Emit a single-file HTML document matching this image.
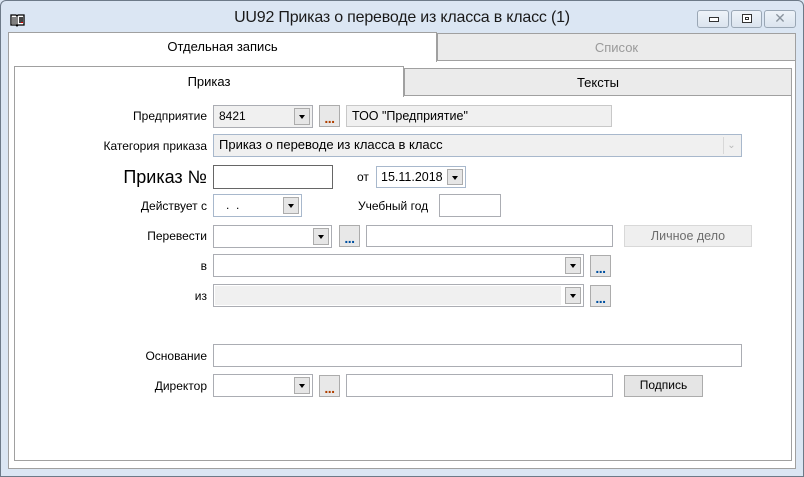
<!DOCTYPE html>
<html><head><meta charset="utf-8"><style>
*{box-sizing:border-box;margin:0;padding:0}
body{width:804px;height:477px;overflow:hidden;background:#dbe6f3;font-family:"Liberation Sans","DejaVu Sans",sans-serif;font-size:12px;color:#000;position:relative}
.a{position:absolute}
.win{left:0;top:0;width:804px;height:477px;border:1px solid #6d7a88;border-radius:6px 6px 0 0;background:#dbe6f3}
.title{left:0;top:9px;width:804px;text-align:center;font-size:16px;color:#1a1a1a;letter-spacing:-0.2px}
.wb{top:10px;height:18px;border:1px solid #9aa7b5;border-radius:3px;background:linear-gradient(#eef3f9,#dbe4ee)}
.lbl{text-align:right;white-space:nowrap}
.box{border:1px solid #abadb3;background:#fff}
.gr{background:#f0f0f0}
.arr{position:absolute;right:2px;top:2px;width:16px;bottom:2px;border:1px solid #acacac;background:#e6e6e6}
.arr:after{content:"";position:absolute;left:4px;top:6px;border-left:3.5px solid transparent;border-right:3.5px solid transparent;border-top:4px solid #000}
.dots{border:1px solid #acacac;background:#e8e8e8;text-align:center;font-size:14px;line-height:24px;font-weight:bold;letter-spacing:-0.5px;overflow:hidden}
.btn{border:1px solid #acacac;background:#e5e5e5;text-align:center;line-height:19px}
.txt{padding-left:5px;line-height:20px}
</style></head><body>
<div class="a win"></div>
<svg class="a" style="left:10px;top:13px" width="16" height="14" viewBox="0 0 16 14"><path d="M1 2h5l1 1 1-1h6v10H8l-1 1-1-1H1z" fill="#fff" stroke="#000" stroke-width="1.3"/><path d="M7 3v10M3 4v7M5 4v7" stroke="#000" stroke-width="1"/><rect x="9" y="4" width="4" height="6" fill="#444"/><rect x="11" y="9" width="2" height="1" fill="#d00"/></svg>
<div class="a title">UU92 Приказ о переводе из класса в класс (1)</div>
<div class="a wb" style="left:697px;width:32px"><div class="a" style="left:11px;top:6px;width:10px;height:5px;border:1px solid #333;background:#fff"></div></div>
<div class="a wb" style="left:731px;width:31px"><div class="a" style="left:10px;top:3px;width:10px;height:9px;border:1px solid #333;background:#fff"><div class="a" style="left:2px;top:2px;width:4px;height:3px;border:1px solid #333"></div></div></div>
<div class="a wb" style="left:764px;width:32px;color:#8a949e;text-align:center;font-size:14px;line-height:15px">✕</div>

<div class="a" style="left:8px;top:60px;width:788px;height:409px;background:#fff;border:1px solid #a0a0a0"></div>
<div class="a" style="left:8px;top:32px;width:429px;height:30px;background:#fff;border:1px solid #a0a0a0;border-bottom:none;text-align:center;line-height:27px;font-size:13px">Отдельная запись</div>
<div class="a" style="left:437px;top:33px;width:359px;height:28px;background:#ebebeb;border:1px solid #a0a0a0;text-align:center;line-height:27px;font-size:13px;color:#9a9a9a">Список</div>
<div class="a" style="left:14px;top:95px;width:778px;height:366px;border:1px solid #a0a0a0;background:#fff"></div>
<div class="a" style="left:14px;top:66px;width:390px;height:31px;background:#fff;border:1px solid #a0a0a0;border-bottom:none;text-align:center;line-height:30px;font-size:13px">Приказ</div>
<div class="a" style="left:404px;top:68px;width:388px;height:28px;background:#ebebeb;border:1px solid #a0a0a0;text-align:center;line-height:28px;font-size:13px">Тексты</div>

<div class="a lbl" style="right:597px;top:109px">Предприятие</div>
<div class="a box gr txt" style="left:213px;top:105px;width:100px;height:23px">8421<div class="arr"></div></div>
<div class="a dots" style="left:319px;top:105px;width:21px;height:22px;color:#b04000">...</div>
<div class="a box gr txt" style="left:346px;top:105px;width:266px;height:22px;border-color:#c8c8c8;font-size:12.5px">ТОО "Предприятие"</div>
<div class="a lbl" style="right:597px;top:139px">Категория приказа</div>
<div class="a box gr txt" style="left:213px;top:134px;width:529px;height:23px;border-color:#a8b8cc;font-size:13px">Приказ о переводе из класса в класс<div class="a" style="right:2px;top:2px;width:16px;height:17px;border-left:1px solid #d8d8d8;color:#bbb;text-align:center;font-size:10px;line-height:17px">⌄</div></div>
<div class="a lbl" style="right:597px;top:167px;font-size:18px">Приказ №</div>
<div class="a box" style="left:213px;top:165px;width:120px;height:24px;border-color:#666"></div>
<div class="a" style="left:357px;top:170px">от</div>
<div class="a box txt" style="left:376px;top:166px;width:90px;height:22px;border-color:#a8b8cc;padding-left:4px;line-height:20px;font-size:12.5px">15.11.2018<div class="arr"></div></div>
<div class="a lbl" style="right:597px;top:199px">Действует с</div>
<div class="a box txt" style="left:213px;top:194px;width:89px;height:23px;border-color:#a8b8cc;padding-left:12px">.&nbsp;&nbsp;.<div class="arr"></div></div>
<div class="a" style="left:358px;top:199px">Учебный год</div>
<div class="a box" style="left:439px;top:194px;width:62px;height:23px"></div>
<div class="a lbl" style="right:597px;top:229px">Перевести</div>
<div class="a box" style="left:213px;top:225px;width:119px;height:23px"><div class="arr"></div></div>
<div class="a dots" style="left:339px;top:225px;width:21px;height:22px;color:#0050a0">...</div>
<div class="a box" style="left:366px;top:225px;width:247px;height:22px"></div>
<div class="a" style="left:624px;top:225px;width:128px;height:22px;border:1px solid #d8d8d8;background:#efefef;text-align:center;line-height:20px;color:#6d6d6d;font-size:12.5px">Личное дело</div>
<div class="a lbl" style="right:597px;top:259px">в</div>
<div class="a box" style="left:213px;top:254px;width:371px;height:23px"><div class="arr"></div></div>
<div class="a dots" style="left:590px;top:255px;width:21px;height:22px;color:#0050a0">...</div>
<div class="a lbl" style="right:597px;top:289px">из</div>
<div class="a box" style="left:213px;top:284px;width:371px;height:23px;background:#fff"><div class="a" style="left:1px;top:1px;right:22px;bottom:1px;background:#f0f0f0"></div><div class="arr"></div></div>
<div class="a dots" style="left:590px;top:285px;width:21px;height:22px;color:#0050a0">...</div>
<div class="a lbl" style="right:597px;top:349px">Основание</div>
<div class="a box" style="left:213px;top:344px;width:529px;height:23px"></div>
<div class="a lbl" style="right:597px;top:379px">Директор</div>
<div class="a box" style="left:213px;top:374px;width:100px;height:23px"><div class="arr"></div></div>
<div class="a dots" style="left:319px;top:375px;width:21px;height:22px;color:#b04000">...</div>
<div class="a box" style="left:346px;top:374px;width:267px;height:23px"></div>
<div class="a btn" style="left:624px;top:375px;width:79px;height:22px">Подпись</div>
</body></html>
